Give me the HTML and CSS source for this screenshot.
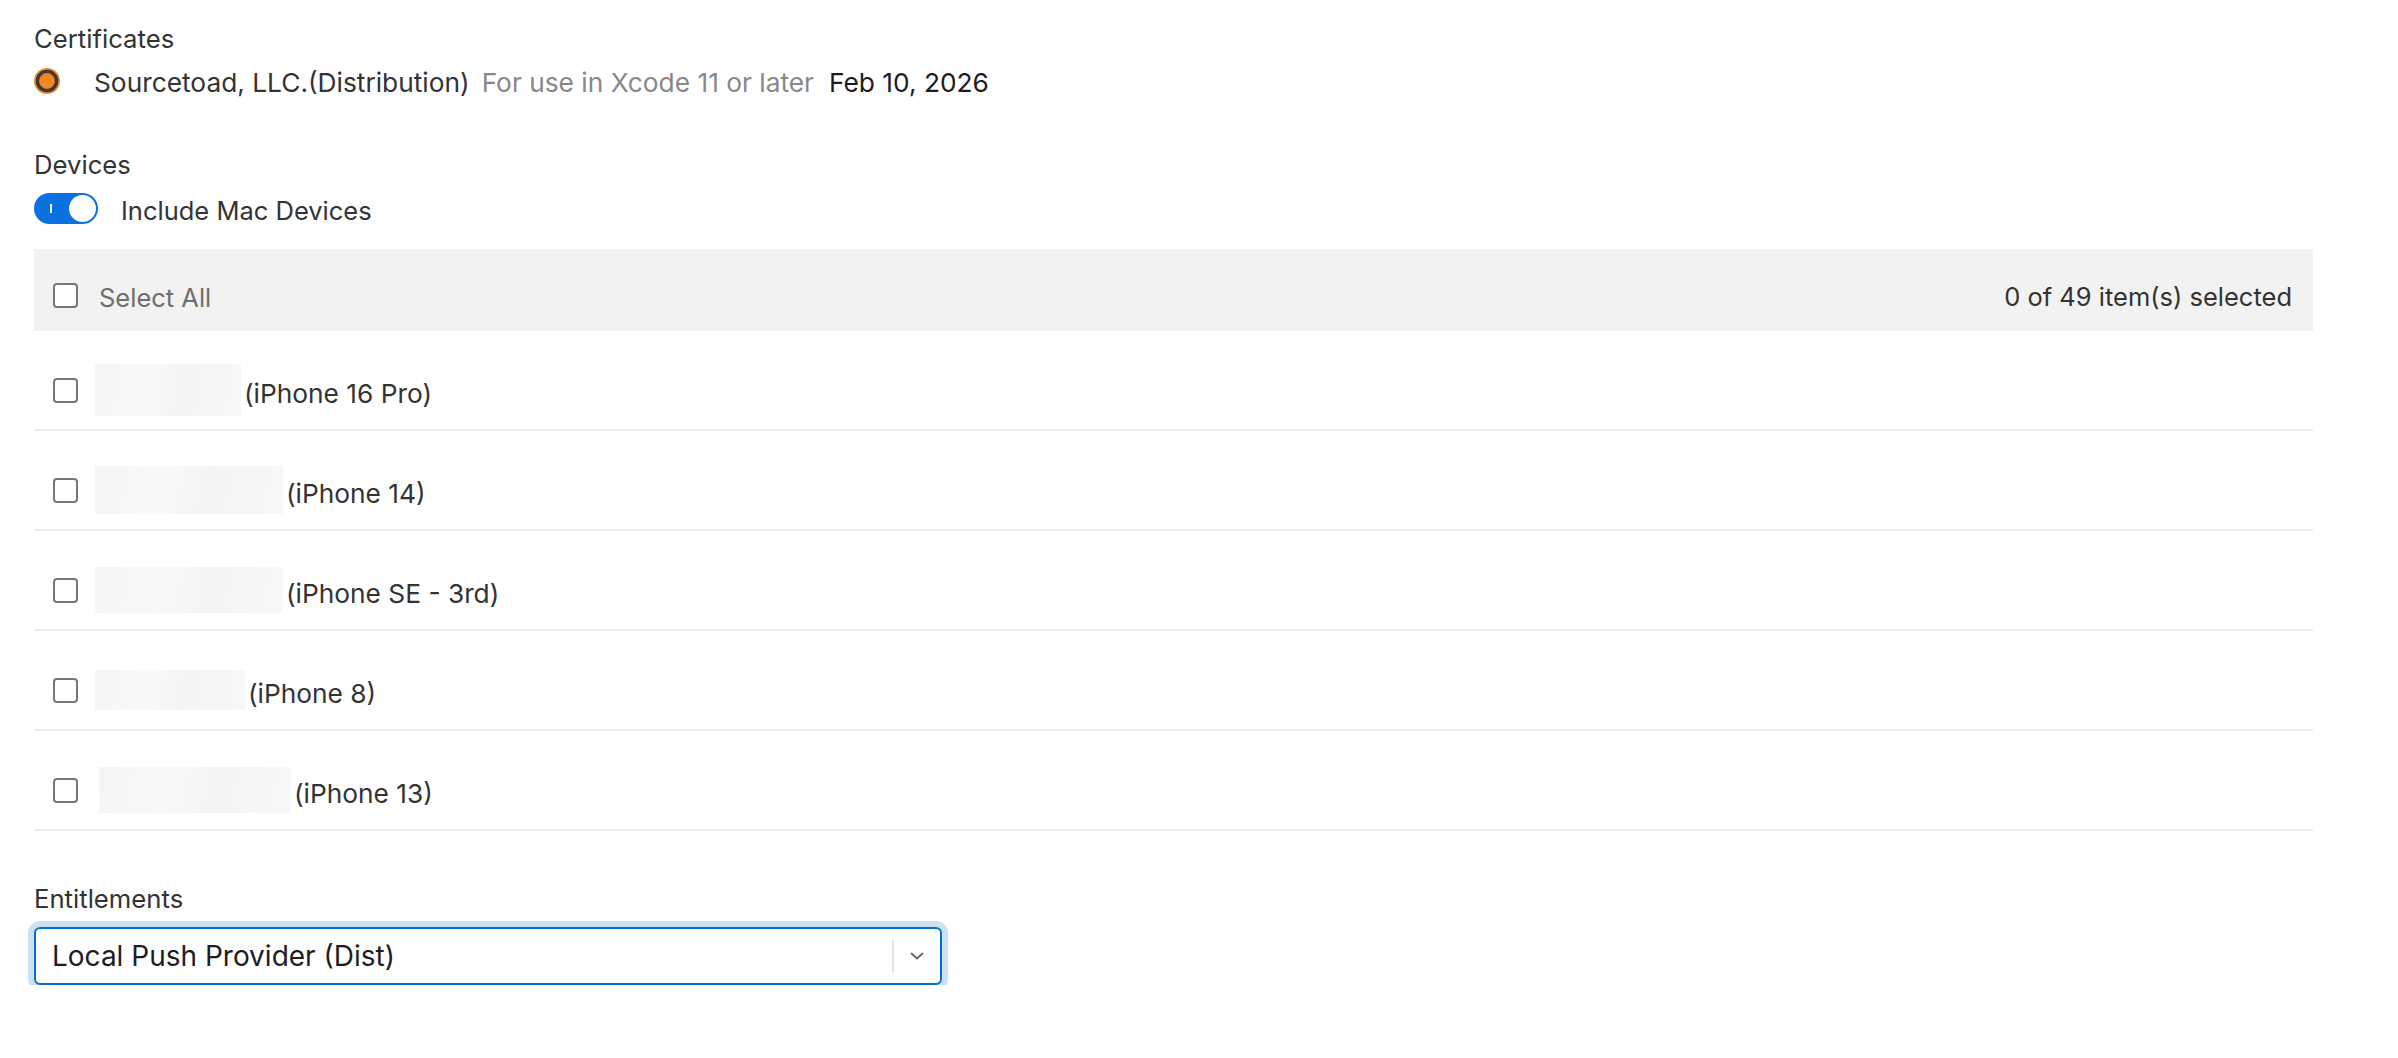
FILE: index.html
```html
<!DOCTYPE html>
<html lang="en">
<head>
<meta charset="utf-8">
<title>Provisioning Profile</title>
<link rel="stylesheet" href="styles.css">
</head>
<body>
<main class="page">
  <section class="group">
    <div class="group-label">Certificates</div>
    <div class="cert-row">
      <svg class="radio" width="26" height="26" viewBox="0 0 26 26" aria-hidden="true">
        <circle cx="13" cy="13" r="13" fill="#f5861f"/>
        <circle cx="13" cy="13" r="9.6" fill="#f5861f" stroke="#3a3a3c" stroke-width="3.4"/>
      </svg>
      <span class="cert-name">Sourcetoad, LLC.(Distribution)</span>
      <span class="cert-note">For use in Xcode 11 or later</span>
      <span class="cert-date">Feb 10, 2026</span>
    </div>
  </section>

  <section class="group devices">
    <div class="group-label">Devices</div>
    <div class="toggle-row">
      <span class="toggle" role="switch" aria-checked="true">
        <span class="toggle-mark"></span>
        <span class="toggle-knob"></span>
      </span>
      <span class="toggle-text">Include Mac Devices</span>
    </div>

    <div class="device-table">
      <div class="table-head">
        <label class="head-left">
          <span class="checkbox"></span>
          <span class="select-all">Select All</span>
        </label>
        <span class="count">0 of 49 item(s) selected</span>
      </div>
      <div class="device-row">
        <span class="checkbox"></span>
        <span class="redacted" style="width:146px;height:52px"></span>
        <span class="device-name">(iPhone 16 Pro)</span>
      </div>
      <div class="device-row">
        <span class="checkbox"></span>
        <span class="redacted" style="width:188px;height:48px"></span>
        <span class="device-name">(iPhone 14)</span>
      </div>
      <div class="device-row">
        <span class="checkbox"></span>
        <span class="redacted" style="width:188px;height:46px"></span>
        <span class="device-name">(iPhone SE - 3rd)</span>
      </div>
      <div class="device-row">
        <span class="checkbox"></span>
        <span class="redacted" style="width:150px;height:40px"></span>
        <span class="device-name">(iPhone 8)</span>
      </div>
      <div class="device-row">
        <span class="checkbox"></span>
        <span class="redacted redacted-5" style="width:192px;height:46px"></span>
        <span class="device-name">(iPhone 13)</span>
      </div>
    </div>
  </section>

  <section class="group entitlements">
    <div class="group-label">Entitlements</div>
    <div class="select">
      <span class="select-value">Local Push Provider (Dist)</span>
      <span class="select-divider"></span>
      <svg class="chevron" width="14" height="8" viewBox="0 0 14 8" aria-hidden="true">
        <path d="M1.5 1.5 L7 6.5 L12.5 1.5" fill="none" stroke="#666" stroke-width="1.8" stroke-linecap="round" stroke-linejoin="round"/>
      </svg>
    </div>
  </section>
</main>
</body>
</html>
```
FILE: styles.css
```css
* {
  box-sizing: border-box;
}

html, body {
  margin: 0;
  background: #ffffff;
}

body {
  font-family: Inter, "Noto Sans", "Liberation Sans", sans-serif;
  color: #333333;
  font-size: 25.5px;
}

.page {
  padding: 24px 0 0 34px;
  width: 2313px;
}

.group-label {
  font-size: 25.7px;
  line-height: 30px;
  color: #333333;
}

/* Certificates */
.cert-row {
  display: flex;
  align-items: center;
  height: 36px;
  margin-top: 10px;
  font-size: 26.3px;
}

.radio {
  flex: none;
  display: block;
  margin-top: -2px;
}

.cert-name {
  margin-left: 34px;
  color: #333333;
}

.cert-note {
  margin-left: 12px;
  color: #888888;
}

.cert-date {
  margin-left: 15px;
  color: #1d1d1f;
}

/* Devices */
.devices {
  margin-top: 50px;
}

.toggle-row {
  display: flex;
  align-items: center;
  height: 36px;
  margin-top: 12px;
}

.toggle {
  flex: none;
  width: 64px;
  height: 31px;
  border-radius: 16px;
  background: #0a72e0;
  display: flex;
  align-items: center;
  justify-content: space-between;
  padding: 2px 2px 2px 16px;
  margin-top: -3px;
}

.toggle-mark {
  width: 2px;
  height: 9px;
  background: #ffffff;
}

.toggle-knob {
  width: 27px;
  height: 27px;
  border-radius: 50%;
  background: #ffffff;
}

.toggle-text {
  margin-left: 23px;
  color: #333333;
}

.device-table {
  margin-top: 21px;
}

.table-head {
  display: flex;
  align-items: center;
  justify-content: space-between;
  height: 82px;
  padding: 10px 21px 0 19px;
  background: #f2f2f2;
}

.head-left {
  display: flex;
  align-items: center;
}

.checkbox {
  flex: none;
  width: 25px;
  height: 25px;
  border: 2px solid #767676;
  border-radius: 4px;
  background: #ffffff;
}

.select-all {
  margin-left: 21px;
  padding-top: 5px;
  color: #6e6e6e;
}

.count {
  padding-top: 3px;
  color: #333333;
}

.device-row {
  display: flex;
  align-items: center;
  height: 100px;
  padding: 20px 0 0 19px;
  border-bottom: 2px solid #ebebeb;
  font-size: 26.3px;
}

.redacted {
  flex: none;
  margin-left: 17px;
  margin-right: 3px;
  background: linear-gradient(100deg, #f5f5f5 0%, #f9f9f9 35%, #f4f4f4 60%, #f8f8f8 100%);
}

.redacted-5 {
  margin-left: 21px;
}

.device-name {
  padding-top: 7px;
  color: #333333;
}

/* Entitlements */
.entitlements {
  margin-top: 53px;
}

.select {
  display: flex;
  align-items: center;
  width: 908px;
  height: 58px;
  margin-top: 13px;
  padding: 0 16px 0 16px;
  border: 2px solid #0070d2;
  border-radius: 6px;
  box-shadow: 0 0 0 6px #cde1f4;
  background: #ffffff;
}

.select-value {
  flex: 1;
  font-size: 28px;
  color: #1d1d1f;
}

.select-divider {
  width: 2px;
  height: 32px;
  background: #e3e3e3;
  margin-right: 16px;
}

.chevron {
  display: block;
  flex: none;
}
```
